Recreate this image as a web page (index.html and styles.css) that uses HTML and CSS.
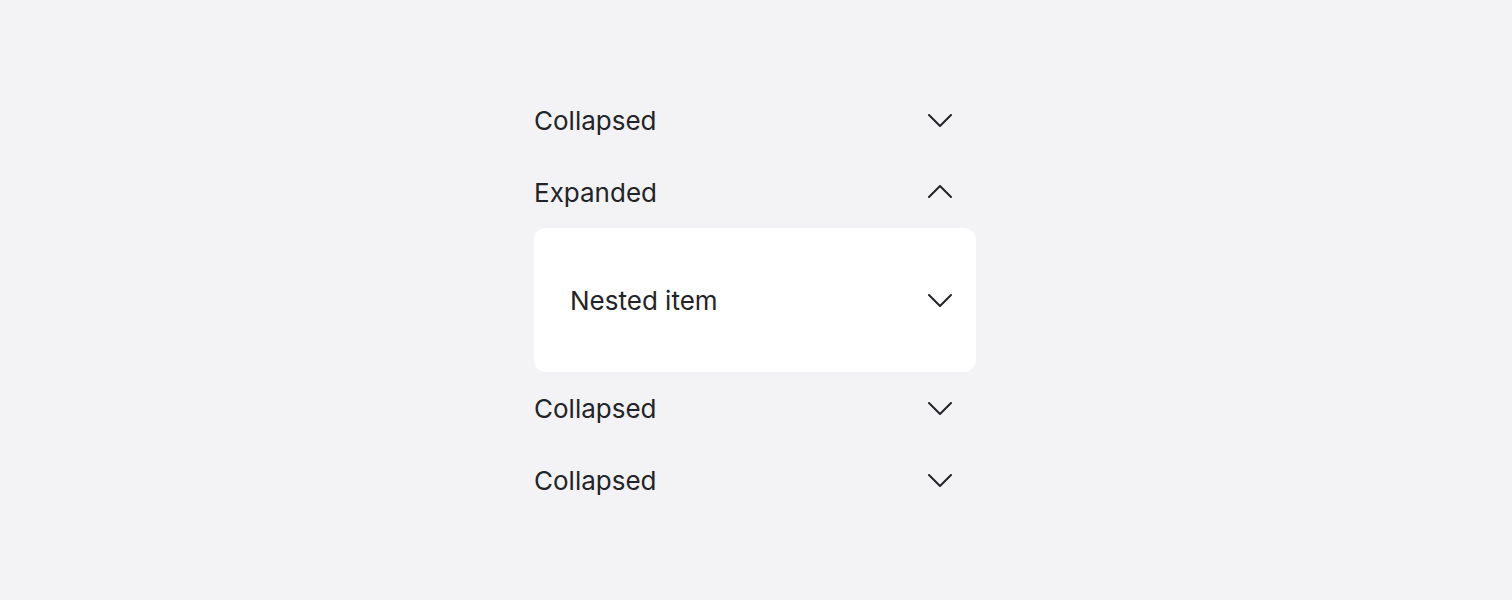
FILE: index.html
```html
<!DOCTYPE html>
<html>
<head>
<meta charset="utf-8">
<link rel="stylesheet" href="styles.css">
</head>
<body>
<div class="page">
  <div class="accordion">
    <div class="row">
      <span class="label">Collapsed</span>
      <svg class="chev" viewBox="0 0 24 24"><polyline points="1,7 12,18 23,7"/></svg>
    </div>
    <div class="row">
      <span class="label">Expanded</span>
      <svg class="chev" viewBox="0 0 24 24"><polyline points="1,17 12,6 23,17"/></svg>
    </div>
    <div class="card">
      <div class="nested">
        <span class="label">Nested item</span>
        <svg class="chev" viewBox="0 0 24 24"><polyline points="1,7 12,18 23,7"/></svg>
      </div>
    </div>
    <div class="row">
      <span class="label">Collapsed</span>
      <svg class="chev" viewBox="0 0 24 24"><polyline points="1,7 12,18 23,7"/></svg>
    </div>
    <div class="row">
      <span class="label">Collapsed</span>
      <svg class="chev" viewBox="0 0 24 24"><polyline points="1,7 12,18 23,7"/></svg>
    </div>
  </div>
</div>
</body>
</html>
```

FILE: styles.css
```css
html, body {
  margin: 0;
  padding: 0;
  background: #f3f3f5;
}
.page {
  height: 600px;
  display: flex;
  align-items: center;
  justify-content: center;
  padding-right: 2px;
  box-sizing: border-box;
  font-family: Inter, "Noto Sans", sans-serif;
  color: #232428;
}
.accordion {
  width: 442px;
  display: flex;
  flex-direction: column;
}
.row {
  height: 72px;
  display: flex;
  align-items: center;
  justify-content: space-between;
  padding-right: 24px;
}
.label {
  font-size: 26px;
  line-height: 32px;
  position: relative;
  top: 1px;
}
.chev {
  width: 24px;
  height: 24px;
  fill: none;
  stroke: #232428;
  stroke-width: 2;
  stroke-linecap: round;
  stroke-linejoin: round;
}
.card {
  background: #ffffff;
  border-radius: 12px;
  height: 144px;
  display: flex;
  align-items: center;
  padding: 0 24px 0 36px;
}
.nested {
  flex: 1;
  display: flex;
  align-items: center;
  justify-content: space-between;
}
```
